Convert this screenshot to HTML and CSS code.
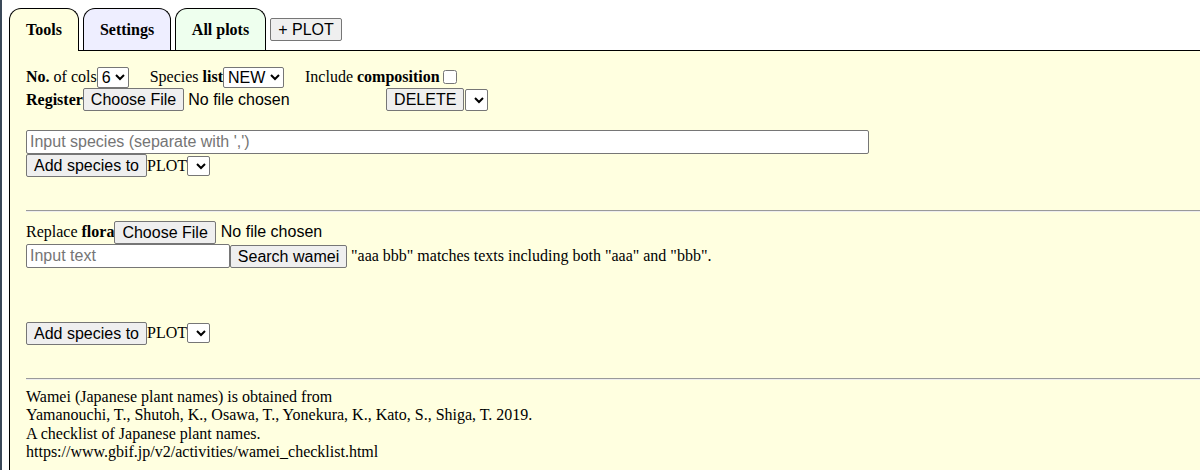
FILE: index.html
```html
<!DOCTYPE html>
<html>
<head>
<meta charset="utf-8">
<link rel="stylesheet" href="styles.css">
</head>
<body>
<div class="page">
  <div class="tabs">
    <div class="tab tab-tools active">Tools</div>
    <div class="tab tab-settings">Settings</div>
    <div class="tab tab-plots">All plots</div>
    <button class="btn btn-plot">+ PLOT</button>
  </div>
  <div class="panel">
    <div class="row row1">
      <span class="txt"><b>No.</b> of cols</span>
      <select class="sel sel-cols"><option>6</option></select>
      <span class="txt gap-l"><span>Species </span><b>list</b></span>
      <select class="sel sel-new"><option>NEW</option></select>
      <span class="txt gap-l2">Include <b>composition</b></span>
      <input type="checkbox" class="chk">
    </div>
    <div class="row row2">
      <span class="txt"><b>Register</b></span>
      <button class="btn">Choose File</button>
      <span class="nofile">No file chosen</span>
      <button class="btn btn-delete">DELETE</button>
      <select class="sel sel-empty"></select>
    </div>
    <input class="inp inp-species" type="text" placeholder="Input species (separate with ',')">
    <div class="row row-add">
      <button class="btn">Add species to</button>
      <span class="txt">PLOT</span>
      <select class="sel sel-plot"></select>
    </div>
    <hr class="sep sep1">
    <div class="row row-replace">
      <span class="txt">Replace <b>flora</b></span>
      <button class="btn">Choose File</button>
      <span class="nofile">No file chosen</span>
    </div>
    <div class="row row-search">
      <input class="inp inp-text" type="text" placeholder="Input text">
      <button class="btn">Search wamei</button>
      <span class="txt hint">"aaa bbb" matches texts including both "aaa" and "bbb".</span>
    </div>
    <div class="row row-add2">
      <button class="btn">Add species to</button>
      <span class="txt">PLOT</span>
      <select class="sel sel-plot"></select>
    </div>
    <hr class="sep sep2">
    <div class="footer">
      Wamei (Japanese plant names) is obtained from<br>
      Yamanouchi, T., Shutoh, K., Osawa, T., Yonekura, K., Kato, S., Shiga, T. 2019.<br>
      A checklist of Japanese plant names.<br>
      https://www.gbif.jp/v2/activities/wamei_checklist.html
    </div>
  </div>
</div>
</body>
</html>
```
FILE: styles.css
```css
html, body {
  margin: 0;
  padding: 0;
  height: 100%;
  overflow: hidden;
  background: #ffffff;
}
body {
  font-family: "Liberation Serif", "Times New Roman", serif;
  font-size: 16px;
  color: #000;
}
.page {
  border-left: 2px solid #3a4859;
  padding-left: 7px;
  padding-top: 8px;
  height: 100%;
  box-sizing: border-box;
  display: flex;
  flex-direction: column;
}
.tabs {
  display: flex;
  align-items: center;
  height: 42px;
  position: relative;
  z-index: 2;
}
.tab {
  height: 42px;
  box-sizing: border-box;
  border: 1px solid #000;
  border-bottom: none;
  border-radius: 12px 12px 0 0;
  display: flex;
  align-items: center;
  justify-content: center;
  font-weight: bold;
  font-size: 16px;
  margin-right: 4px;
  align-self: flex-end;
}
.tab-tools { width: 70px; background: #ffffe0; height: 43px; margin-bottom: -1px; }
.tab-settings { width: 88px; background: #eeeeff; }
.tab-plots { width: 91px; background: #eeffee; }
.btn {
  font-family: "Liberation Sans", Arial, sans-serif;
  font-size: 16px;
  height: 23px;
  padding: 0 7px;
  border: 1px solid #767676;
  border-radius: 2px;
  background: #efefef;
  color: #000;
  box-sizing: border-box;
  line-height: 21px;
  margin: 0;
}
.btn-plot { margin-top: 1px; width: 72px; padding: 0; }
.panel {
  flex: 1;
  background: #ffffe0;
  border-left: 1px solid #000;
  border-top: 1px solid #000;
  padding: 15px 0 0 16px;
  box-sizing: border-box;
  display: flex;
  flex-direction: column;
  align-items: flex-start;
}
.row {
  display: flex;
  align-items: center;
  white-space: pre;
}
.row1 { height: 22px; }
.row2 { height: 23px; }
.txt { white-space: pre; }
.gap-l { margin-left: 21px; }
.sel {
  font-family: "Liberation Sans", Arial, sans-serif;
  font-size: 16px;
  height: 21px;
  box-sizing: border-box;
  margin: 0;
  padding: 0;
  border: 1px solid #767676;
  border-radius: 2px;
  background: #fff;
  color: #000;
}
.sel-cols { width: 32px; }
.sel-new { width: 61px; }
.sel-empty { width: 23px; height: 22px; margin-left: 1px; }
.sel-plot { width: 23px; height: 20px; }
.chk {
  width: 14px;
  height: 14px;
  margin: 0 0 0 3px;
}
.gap-l2 { margin-left: 21px; }
.nofile {
  font-family: "Liberation Sans", Arial, sans-serif;
  font-size: 16px;
  margin-left: 4px;
  width: 198px;
}
.row-replace .nofile { margin-left: 5px; }
.btn-delete { width: 78px; padding: 0; }
.inp {
  font-family: "Liberation Sans", Arial, sans-serif;
  font-size: 16px;
  height: 24px;
  box-sizing: border-box;
  border: 1px solid #767676;
  border-radius: 2px;
  padding: 1px 3px;
  margin: 0;
  background: #fff;
}
.inp::placeholder { color: #757575; }
.inp-species { width: 843px; margin-top: 19px; }
.row-add { height: 23px; }
.row-add .btn, .row-add2 .btn { width: 121px; padding: 0; }
.sep {
  align-self: stretch;
  height: 0;
  margin: 0;
  border: none;
  border-top: 1px solid #9a9a9a;
  border-bottom: 1px solid #eeeeee;
}
.sep1 { margin-top: 33px; }
.row-replace { height: 24px; margin-top: 8px; }
.row-search { height: 24px; }
.inp-text { width: 204px; }
.row-search .btn { width: 117px; padding: 0; }
.hint { margin-left: 4px; font-size: 16px; }
.row-add2 { height: 24px; margin-top: 53px; }
.sep2 { margin-top: 33px; }
.footer {
  margin-top: 8px;
  line-height: 18.4px;
}
```
